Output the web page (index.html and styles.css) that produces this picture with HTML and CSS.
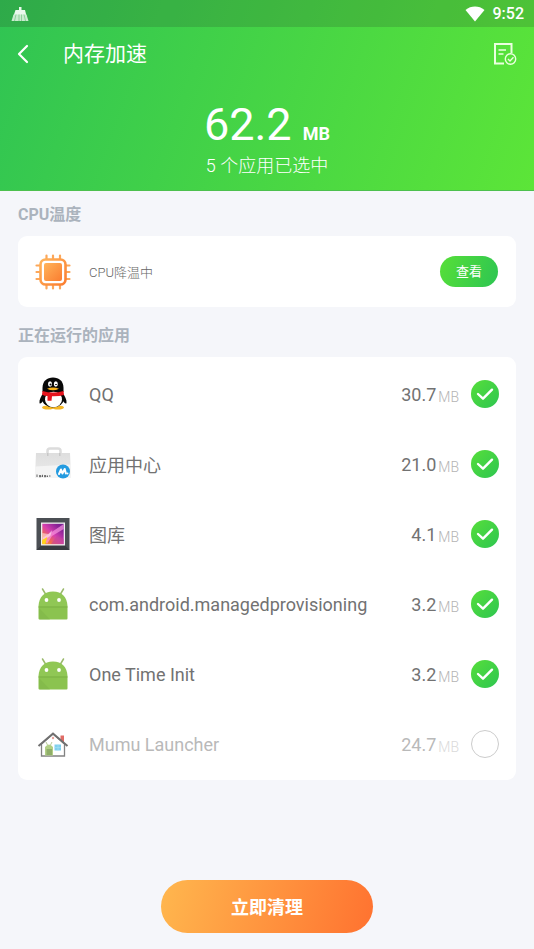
FILE: index.html
```html
<!DOCTYPE html>
<html lang="zh-CN">
<head>
<meta charset="utf-8">
<meta name="viewport" content="width=device-width, initial-scale=1">
<title>内存加速</title>
<link rel="stylesheet" href="styles.css">
</head>
<body>
<svg class="defs" width="0" height="0" aria-hidden="true">
  <defs>
    <linearGradient id="orange" x1="0" y1="0" x2="1" y2="1"><stop offset="0" stop-color="#ffb45a"/><stop offset="1" stop-color="#fb7d30"/></linearGradient>
    <linearGradient id="photo" x1="0" y1="1" x2="1" y2="0"><stop offset="0" stop-color="#f9a51c"/><stop offset=".25" stop-color="#f06a50"/><stop offset=".5" stop-color="#d63fb0"/><stop offset=".8" stop-color="#8a2397"/><stop offset="1" stop-color="#6a1b8c"/></linearGradient>
    <linearGradient id="bag" x1="0" y1="0" x2="0" y2="1"><stop offset="0" stop-color="#dedede"/><stop offset="1" stop-color="#ececec"/></linearGradient>
    <symbol id="tick" viewBox="0 0 28 28"><path d="M7 14l5 4.700 9-9" fill="none" stroke="#fff" stroke-width="2.400" stroke-linecap="round" stroke-linejoin="round"/></symbol>
    <symbol id="android" viewBox="0 0 36 36">
      <path d="M7.500 3l3 5M28.500 3l-3 5" stroke="#9aba6c" stroke-width="1.500" stroke-linecap="round"/>
      <path d="M3.500 20C4 11 9 5.500 18 5.500S32 11 32.500 20z" fill="#90c755"/>
      <path d="M3.500 20h29v12.500q0 1-1 1h-27q-1 0-1-1z" fill="#8bc34f"/>
      <path d="M3.500 21h29" stroke="#7bb045" stroke-width="1"/>
      <path d="M4 22l11 11.500H4.500z" fill="#7eb447" opacity=".5"/>
      <circle cx="11.500" cy="14" r="1.900" fill="#fff"/><circle cx="24" cy="14" r="1.900" fill="#fff"/>
    </symbol>
  </defs>
</svg>

<header class="hero">
  <div class="status">
    <svg class="status-app" viewBox="0 0 18 16" aria-hidden="true"><path d="M8 1h2.500v3H14l1.500 6h-13L4.500 4H8z" fill="#eaf8ec"/><path d="M2.500 8.500h13l2 6.500H.5z" fill="#c9eccf"/><path d="M5 8.500L3.500 15M8 8.500V15M10.500 8.500V15M13 8.500l1.500 6.500" stroke="#75c382" stroke-width=".7"/></svg>
    <svg class="wifi" viewBox="0 0 20 16" aria-hidden="true"><path d="M.5 4C6 -.6 14 -.6 19.500 4L10 15.500z" fill="#fff"/></svg>
    <time>9:52</time>
  </div>
  <nav class="bar">
    <button class="icon-btn" type="button" aria-label="返回"><svg class="back" viewBox="0 0 15 20"><path d="M11 2L3 10l8 8" fill="none" stroke="#fff" stroke-width="2.200" stroke-linecap="round" stroke-linejoin="round"/></svg></button>
    <h1>内存加速</h1>
    <button class="icon-btn" type="button" aria-label="白名单"><svg class="list-icon" viewBox="0 0 24 24" fill="none" stroke="#eaffdf"><path d="M11 21.500H2V2h16.500v9" stroke-width="2"/><path d="M5.500 8h7.500M5.500 12h5" stroke-width="1.700"/><circle cx="17.500" cy="17" r="5.200" stroke-width="1.400"/><path d="M15 17l2 2 3.500-3.700" stroke-width="1.400"/></svg></button>
  </nav>
  <p class="total">62.2 <b>MB</b></p>
  <p class="selected">5 个应用已选中</p>
</header>

<main>
  <h2>CPU温度</h2>
  <section class="card cpu">
    <svg class="app-icon" viewBox="0 0 36 36" aria-hidden="true">
      <path d="M11.500 1.500v5M18 1.500v5M25 1.500v5M11.500 29.500v5M18 29.500v5M25 29.500v5M1.500 11.500h5M1.500 18h5M1.500 25h5M29.500 11.500h5M29.500 18h5M29.500 25h5" stroke="#fca75a" stroke-width="2.200" stroke-linecap="round"/>
      <rect x="5.500" y="5.500" width="25" height="25" rx="5" fill="#fff" stroke="url(#orange)" stroke-width="2.600"/>
      <rect x="9" y="9" width="18" height="18" rx="2" fill="url(#orange)"/>
    </svg>
    <span class="cpu-text">CPU降温中</span>
    <button class="view" type="button">查看</button>
  </section>

  <h2>正在运行的应用</h2>
  <ul class="card apps">
    <li><label>
      <svg class="app-icon" viewBox="0 0 36 36" aria-hidden="true">
        <ellipse cx="13" cy="31.500" rx="6" ry="2" fill="#f5b623"/><ellipse cx="23" cy="31.500" rx="6" ry="2" fill="#f5b623"/>
        <path d="M9 16c-3 4-5 8-4.500 11 .5 1.500 2.500-.5 3.500-2l20 0c1 1.500 3 3.500 3.500 2C32 24 30 20 27 16z" fill="#080808"/>
        <ellipse cx="18" cy="22.500" rx="11" ry="9" fill="#080808"/>
        <path d="M7.500 16V12C7.500 5 12 1.500 18 1.500S28.500 5 28.500 12v4z" fill="#080808"/>
        <ellipse cx="18.500" cy="23.500" rx="8.500" ry="7.800" fill="#fff"/>
        <path d="M7.500 15q10.500 3 21 0l.5 4q-5 1.500-12 1.300l-.5 4.500h-4V20Q9 20 7 18.500z" fill="#e5131d"/>
        <ellipse cx="15" cy="8" rx="2" ry="2.700" fill="#fff"/><ellipse cx="20.800" cy="8" rx="2" ry="2.700" fill="#fff"/>
        <circle cx="15.500" cy="8.500" r="1" fill="#080808"/><path d="M20 9q1-2 2 0" fill="none" stroke="#080808" stroke-width=".8"/>
        <path d="M12 12.800q6-2.500 12 0-6 3-12 0z" fill="#f8b21b"/>
      </svg>
      <span class="name">QQ</span><span class="size">30.7</span><small>MB</small>
      <span class="check"><input type="checkbox" checked><svg aria-hidden="true"><use href="#tick"/></svg></span>
    </label></li>
    <li><label>
      <svg class="app-icon" viewBox="0 0 36 36" aria-hidden="true">
        <path d="M12.500 8V5q0-2.500 2.500-2.500h8q2.500 0 2.500 2.500v3" fill="none" stroke="#dcdcdc" stroke-width="2.500"/>
        <path d="M1 7h34L36 31q0 1-1 1H1q-1 0-1-1z" fill="url(#bag)"/><path d="M0 20.500l36-2v12.500q0 1-1 1H1q-1 0-1-1z" fill="#f4f4f4"/>
        <path d="M12 7v3h1.500V7M24 7v3h1.500V7" fill="#c7c7c7"/>
        <path d="M2 28.500v2.500M4 29.700h2v1H4M7.500 28.800v2.200M9 29.700h2v1H9M12.500 29.500v1.500M14 30h1.500" fill="none" stroke="#555" stroke-width=".9"/>
        <circle cx="28" cy="25.500" r="7" fill="#249be0"/><path d="M24 28l2-4.500 1.400 4 2.300-4.500 1.200 4.500" fill="none" stroke="#fff" stroke-width="2" stroke-linejoin="round" stroke-linecap="round"/><circle cx="32.500" cy="27.500" r="1" fill="#fff"/>
      </svg>
      <span class="name">应用中心</span><span class="size">21.0</span><small>MB</small>
      <span class="check"><input type="checkbox" checked><svg aria-hidden="true"><use href="#tick"/></svg></span>
    </label></li>
    <li><label>
      <svg class="app-icon" viewBox="0 0 36 36" aria-hidden="true">
        <rect x="1.500" y="2" width="33" height="32" fill="#4b4f54"/><path d="M1.500 34l5-5h23l5 5z" fill="#383b40"/>
        <rect x="6" y="6.500" width="24" height="23" fill="#eee"/><rect x="7.300" y="7.800" width="21.400" height="20.400" fill="url(#photo)"/>
        <path d="M7.300 22l8-5L28.700 8v5L17 20l-5 8z" fill="#ff9be4" opacity=".65"/><path d="M7.300 17l6 1 4-4-2 6-8 5z" fill="#fff" opacity=".5"/><path d="M7.300 24l5-3-2 7h-3z" fill="#ffd31a"/><path d="M16 28l6-8 6.700 3v5z" fill="#c34a96" opacity=".6"/>
      </svg>
      <span class="name">图库</span><span class="size">4.1</span><small>MB</small>
      <span class="check"><input type="checkbox" checked><svg aria-hidden="true"><use href="#tick"/></svg></span>
    </label></li>
    <li><label>
      <svg class="app-icon" aria-hidden="true"><use href="#android"/></svg>
      <span class="name">com.android.managedprovisioning</span><span class="size">3.2</span><small>MB</small>
      <span class="check"><input type="checkbox" checked><svg aria-hidden="true"><use href="#tick"/></svg></span>
    </label></li>
    <li><label>
      <svg class="app-icon" aria-hidden="true"><use href="#android"/></svg>
      <span class="name">One Time Init</span><span class="size">3.2</span><small>MB</small>
      <span class="check"><input type="checkbox" checked><svg aria-hidden="true"><use href="#tick"/></svg></span>
    </label></li>
    <li class="off"><label>
      <svg class="app-icon" viewBox="0 0 36 36" aria-hidden="true">
        <path d="M25.500 9.500h3.500v7l-3.500-3z" fill="#e06c66"/>
        <path d="M6.500 18L18 8l11.500 10v12h-23z" fill="#fff" stroke="#828282" stroke-width="1.300"/>
        <path d="M3.500 20L18 7.500 32.500 20" fill="none" stroke="#707070" stroke-width="2"/>
        <circle cx="18" cy="12" r="1.200" fill="#e8a09a"/>
        <path d="M10 21q4-5 8 0v8.500h-8z" fill="#b2cf86"/><path d="M11.500 23h5.500v6h-5.500z" fill="#8fae68"/><path d="M11 16l1.500 3M17 16l-1.500 3" stroke="#a4bd7d" stroke-width=".8"/>
        <path d="M19.500 18.500h6.500v6h-6.500z" fill="#7fd0ee"/><path d="M19.500 21.500h6.500M23 18.500v6" stroke="#a9e1f4" stroke-width=".6"/>
      </svg>
      <span class="name">Mumu Launcher</span><span class="size">24.7</span><small>MB</small>
      <span class="check"><input type="checkbox"><svg aria-hidden="true"><use href="#tick"/></svg></span>
    </label></li>
  </ul>
</main>

<footer><button class="clean" type="button">立即清理</button></footer>
</body>
</html>
```
FILE: styles.css
```css
* { box-sizing: border-box; }

body {
  margin: 0;
  min-height: 100vh;
  display: flex;
  flex-direction: column;
  background: #f5f6fa;
  color: #727272;
  font-family: Roboto, "Noto Sans CJK SC", sans-serif;
}

h1, h2, p, ul { margin: 0; padding: 0; }
ul { list-style: none; }

button {
  border: 0;
  padding: 0;
  color: #fff;
  font-family: inherit;
  cursor: pointer;
}

.defs { position: absolute; }

.hero {
  padding-bottom: 12px;
  background: linear-gradient(110deg, #30c453, #5ce538);
  border-bottom: 1px solid #4cc04e;
  color: #fff;
}

.status {
  display: flex;
  align-items: center;
  height: 27px;
  padding: 0 10px 0 11px;
  background: rgba(40, 70, 40, 0.2);
}
.status-app { width: 18px; height: 16px; margin-right: auto; }
.wifi { width: 20px; height: 16px; margin-right: 8px; }
.status time { font-size: 16px; font-weight: 500; line-height: 28px; }

.bar {
  display: flex;
  align-items: center;
  height: 54px;
  padding: 0 17px 0 16px;
}
.bar h1 {
  flex: 1;
  margin-left: 32px;
  font-size: 21px;
  font-weight: 400;
  line-height: 28px;
}
.icon-btn { display: flex; background: none; }
.back { width: 15px; height: 20px; }
.list-icon { width: 24px; height: 24px; }

.total {
  margin-top: 16px;
  text-align: center;
  font-size: 45px;
  line-height: 56px;
}
.total b { font-size: 18px; line-height: 1; }

.selected {
  text-align: center;
  font-size: 18px;
  font-weight: 300;
  line-height: 25px;
}

main { padding: 0 18px; }

h2 {
  padding: 12px 0 9px;
  font-size: 16px;
  font-weight: 700;
  line-height: 24px;
  color: #abb3bd;
}
.card + h2 { padding: 17px 0 9px; }

.card {
  background: #fff;
  border-radius: 9px;
}

.app-icon { flex: none; width: 36px; height: 36px; }

.cpu {
  display: flex;
  align-items: center;
  height: 71px;
  padding: 0 18px 0 17px;
}
.cpu-text {
  flex: 1;
  margin-left: 18px;
  font-size: 13px;
  font-weight: 300;
  color: #666;
}
.view {
  width: 58px;
  height: 31px;
  padding-bottom: 2px;
  border-radius: 16px;
  background: linear-gradient(110deg, #57df38, #2dc552);
  font-size: 13px;
}

.apps { padding: 2px 0 1px; }
.apps label {
  display: flex;
  align-items: center;
  height: 70px;
  padding: 0 17px;
}
.name { flex: 1; margin-left: 18px; font-size: 18px; }
.size { font-size: 18px; }
.apps small {
  margin: 5px 12px 0 2px;
  font-size: 14px;
  font-weight: 300;
  color: #b4b4b4;
}

.check { display: grid; width: 28px; height: 28px; }
.check input, .check svg { grid-area: 1 / 1; width: 28px; height: 28px; margin: 0; }
.check svg { pointer-events: none; visibility: hidden; }
.check input {
  appearance: none;
  border: 1px solid #ccc;
  border-radius: 50%;
}
.check input:checked {
  border: 0;
  background: linear-gradient(135deg, #56de3a, #2ec651);
}
.check input:checked + svg { visibility: visible; }

.off .name, .off .size { color: #b9b9b9; }
.off small { color: #dadada; }

footer {
  display: flex;
  justify-content: center;
  margin-top: auto;
  padding: 16px;
}
.clean {
  width: 212px;
  height: 53px;
  padding-bottom: 2px;
  border-radius: 27px;
  background: linear-gradient(105deg, #ffb74e, #ff7230);
  font-size: 18px;
  font-weight: 700;
}
```
